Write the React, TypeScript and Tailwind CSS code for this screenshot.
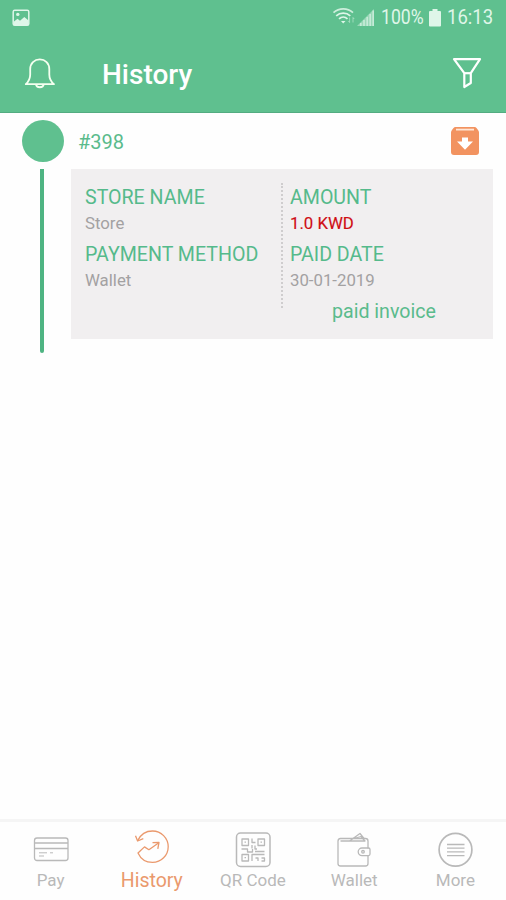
import type { ReactNode } from "react";
import clsx from "clsx";

function StatusBar() {
  return (
    <div className="flex h-9 items-center px-3 text-[#dff6e9]">
      <svg viewBox="0 0 18 18" className="size-[18px]" fill="none">
        <rect x="1.2" y="1.2" width="15.6" height="15" rx="1.5" stroke="currentColor" strokeWidth="1.5" />
        <circle cx="5.8" cy="5.4" r="1.7" fill="currentColor" />
        <path d="M2 12.5 5.5 9.8 8 11.8 12.3 8 16 11V16H2z" fill="currentColor" />
      </svg>
      <div className="flex-1" />
      <svg viewBox="0 0 24 20" className="-mt-1 h-5 w-6" fill="none" stroke="currentColor" strokeWidth="1.7">
        <path d="M1.5 6.6C7 1.6 15.5 1.6 21 6.6" opacity=".85" />
        <path d="M4.2 9.8C8.2 6.2 14.3 6.2 18.3 9.8" />
        <path d="M7 12.8C9.5 10.6 13 10.6 15.5 12.8" />
        <path d="M9 14.9 11.2 17.6 13.5 14.9Z" fill="currentColor" stroke="none" />
        <path d="M17.6 11.5v5M16.4 15l1.2 1.5M21 16.5v-5M22.2 13 21 11.5" strokeWidth=".8" opacity=".6" />
      </svg>
      <svg viewBox="0 0 18 18" className="ml-px size-[18px]" fill="currentColor">
        <path d="M0 17 17 0V17z" opacity=".45" />
        <path d="M3 14h1.6v3H3zM6.2 11h1.6v6H6.2zM9.4 8H11v9H9.4zM12.4 5H14v12h-1.6zM15.4 1.6H17V17h-1.6z" opacity=".65" />
      </svg>
      <span className="ml-1.5 w-[45px] pt-0.5">
        <span className="inline-block origin-left scale-x-[.84] text-[21px] leading-none">100%</span>
      </span>
      <svg viewBox="0 0 12 18" className="ml-[3px] h-[18px] w-3" fill="currentColor">
        <path d="M3.5 0h5v2H11a1 1 0 0 1 1 1v13.5a1 1 0 0 1-1 1H1a1 1 0 0 1-1-1V3a1 1 0 0 1 1-1h2.5z" />
      </svg>
      <span className="ml-1.5 w-[47px] pt-0.5">
        <span className="inline-block origin-left scale-x-[.88] text-[21px] leading-none">16:13</span>
      </span>
    </div>
  );
}

function Header() {
  return (
    <header className="h-[113px] shrink-0 border-b border-[#53ac81] bg-[#5fc08f] text-white">
      <StatusBar />
      <div className="flex h-[76px] items-center px-6">
        <svg viewBox="0 0 32 32" className="size-8" fill="none" stroke="#f4fff0" strokeWidth="1.8" strokeLinejoin="round">
          <path d="M1.8 26.2C4.2 24 6.2 20.5 6.2 16.5V11C6.2 5.2 10.4 1.4 15.8 1.4S25.3 5.2 25.3 11v5.5C25.3 20.5 27.3 24 30 26.2z" />
          <path d="M12 26.4c.4 3.8 7.3 3.8 7.7 0" />
        </svg>
        <h1 className="ml-[46px] mt-0.5 text-[28px] font-medium leading-8">History</h1>
        <div className="flex-1" />
        <svg viewBox="0 0 30 32" className="-mt-0.5 h-8 w-[30px]" fill="none" stroke="currentColor" strokeWidth="2.2" strokeLinejoin="round">
          <path d="M2 2.2H28L18.8 16.2V26L12.3 30V16.2z" />
          <path d="M12.3 16.2h6.5" />
        </svg>
      </div>
    </header>
  );
}

type FieldProps = { label: string; value: string; highlight?: boolean };

function Field({ label, value, highlight }: FieldProps) {
  return (
    <div className="h-[57px] whitespace-nowrap">
      <div className="text-[19.6px] leading-[26px] text-[#55ba8b]">{label}</div>
      <div
        className={clsx(
          "text-[16.8px] leading-6",
          highlight ? "text-[#cf0d14] [-webkit-text-stroke:0.15px_#cf0d14]" : "text-[#a3a1a2]",
        )}
      >
        {value}
      </div>
    </div>
  );
}

function HistoryItem() {
  return (
    <section className="pl-[22px] pr-[13px] pt-[7px]">
      <div className="flex h-[42px] items-center">
        <div className="size-[42px] rounded-full bg-[#5fc08f]" />
        <span className="ml-[14px] mt-px text-[20px] text-[#5abb8c]">#398</span>
        <svg viewBox="0 0 28 28" className="ml-auto mr-[14px] size-7">
          <path d="M4.5 0h19q1.3 0 2.2 1.2l1.3 1.7q1 1.2 1 2.6V25a3 3 0 0 1-3 3H3a3 3 0 0 1-3-3V5.5Q0 4.1 1 2.9L2.3 1.2Q3.2 0 4.5 0z" fill="#f29360" />
          <path d="M5 2.6h18" stroke="#ffe6d6" strokeWidth="1.8" />
          <path d="M11 10.5h6v4h5L14 22.7 6 14.5H11z" fill="#fff" />
        </svg>
      </div>
      <div className="mt-[7px] flex items-start">
        <div className="ml-[18px] h-[184px] w-1 rounded-b-sm bg-[#4eb482]" />
        <div className="ml-[27px] flex h-[170px] flex-1 bg-[#f1eff0] pl-[14px] pt-[14px]">
          <div className="w-[196px] pt-0.5">
            <Field label="STORE NAME" value="Store" />
            <Field label="PAYMENT METHOD" value="Wallet" />
          </div>
          <div className="h-[125px] border-l-2 border-dotted border-[#cfcdce]" />
          <div className="flex-1 pl-[7px] pt-0.5">
            <Field label="AMOUNT" value="1.0 KWD" highlight />
            <Field label="PAID DATE" value="30-01-2019" />
            <div className="pl-[42px] text-[19.6px] leading-[26px] text-[#5abb8c]">paid invoice</div>
          </div>
        </div>
      </div>
    </section>
  );
}

const TABS: { label: string; icon: ReactNode; active?: boolean }[] = [
  {
    label: "Pay",
    icon: (
      <>
        <rect x="1.5" y="6" width="33.5" height="22.5" rx="2.5" />
        <path d="M1.5 11H35M1.5 16.5H35" />
        <path d="M6 20.8h8M17 20.8h3M6 24h5" strokeWidth="1" />
      </>
    ),
  },
  {
    label: "History",
    active: true,
    icon: (
      <>
        <path d="M3.7 11.6C7 4.8 12.5 2 18.5 2a15.7 15.7 0 0 1 0 31.4C12 33.4 6.5 29.5 4 24l6.5-6.1 4.4 2.8L24.5 14" />
        <path d="M18.5 13.6 25 13.4 23.8 19.8M1.5 6.8 3.6 12 9.3 9.6" />
      </>
    ),
  },
  {
    label: "QR Code",
    icon: (
      <>
        <rect x="1.5" y="1" width="33.5" height="33.5" rx="4" strokeWidth="1.5" />
        <path d="M7 7h6.5v6.5H7zM23 7h6.5v6.5H23zM7 22.5h6.5V29H7zM17 6.5v4h3.5M17 13v3.5M20 13.5v3.5h2M6.5 17h6v3h5v-3M20 19.5h9.5M17 29v-6.5h12.5M20.5 26H23v3M26.5 26h3v3h-3" />
        <path d="M9.5 10.2H11M25.5 10.2H27M9.5 25.7H11" />
      </>
    ),
  },
  {
    label: "Wallet",
    icon: (
      <>
        <path d="M32 16.5V9a2.5 2.5 0 0 0-2.5-2.5H4.5A2.7 2.7 0 0 0 2 9.2V31.5A2.5 2.5 0 0 0 4.5 34h25a2.5 2.5 0 0 0 2.5-2.5V23.5" />
        <path d="M4.5 9H13.5L24 1.5 28 6.5M18 6.5l7-2 4 4.5H13.5" />
        <path d="M32.5 16h-6.5a3.8 3.8 0 0 0 0 7.6h6.5a1.5 1.5 0 0 0 1.5-1.5v-4.6A1.5 1.5 0 0 0 32.5 16z" />
        <circle cx="27" cy="19.8" r="1.3" />
      </>
    ),
  },
  {
    label: "More",
    icon: (
      <>
        <circle cx="18.5" cy="17.8" r="16.4" strokeWidth="1.7" />
        <path d="M10 12.5h17.5M10 16.2h17.5M10 19.9h17.5M10 23.6h17.5" />
      </>
    ),
  },
];

function TabBar() {
  return (
    <nav className="grid h-[81px] shrink-0 grid-cols-5 border-t-[3px] border-[#f5f5f5]">
      {TABS.map(({ label, icon, active }) => (
        <div
          key={label}
          className={clsx("flex flex-col items-center", active ? "pt-[7px] text-[#ea996d]" : "pt-[10px] text-[#b9b9b9]")}
        >
          <svg viewBox="0 0 36 36" className="size-9" fill="none" stroke="currentColor" strokeWidth="1.3" strokeLinejoin="round">
            {icon}
          </svg>
          <span className={clsx("whitespace-nowrap", active ? "mt-1 text-[19.5px] leading-6" : "text-[17px] leading-6")}>
            {label}
          </span>
        </div>
      ))}
    </nav>
  );
}

export default function App() {
  return (
    <div className="flex h-[900px] w-[506px] flex-col overflow-hidden bg-[#fefefe] font-[Roboto,sans-serif]">
      <Header />
      <main className="flex-1">
        <HistoryItem />
      </main>
      <TabBar />
    </div>
  );
}
